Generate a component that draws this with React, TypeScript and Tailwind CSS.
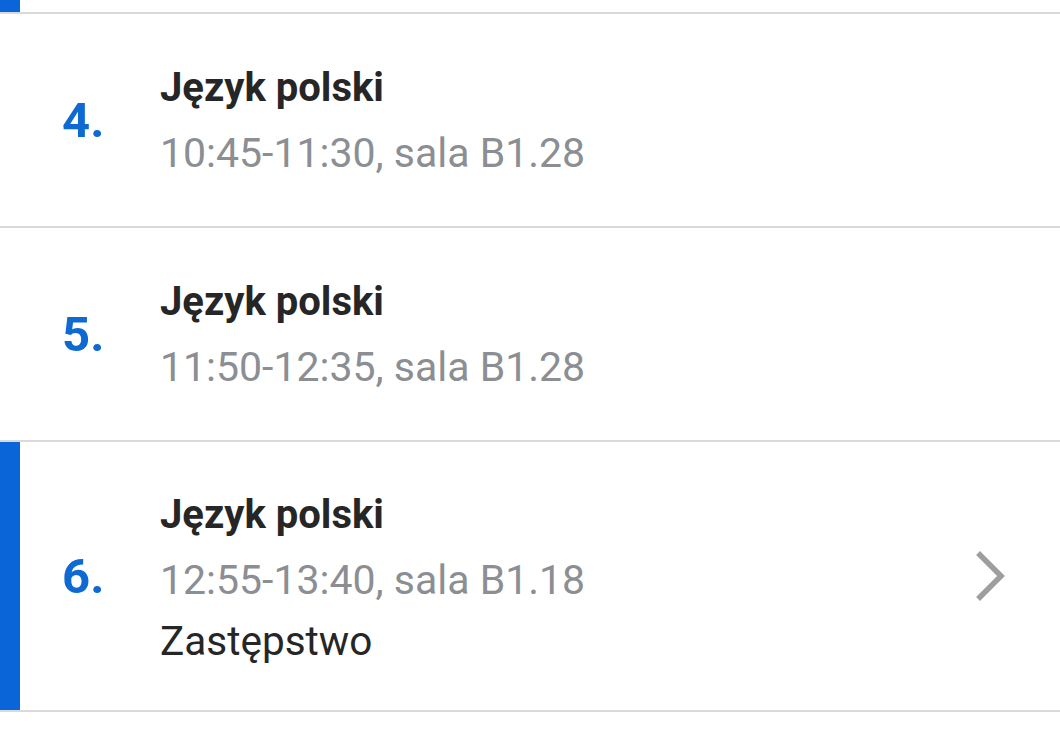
import React from "react";

type Lesson = {
  no: number;
  subject: string;
  time: string;
  note?: string;
  current?: boolean;
};

const lessons: Lesson[] = [
  { no: 4, subject: "Język polski", time: "10:45-11:30, sala B1.28" },
  { no: 5, subject: "Język polski", time: "11:50-12:35, sala B1.28" },
  { no: 6, subject: "Język polski", time: "12:55-13:40, sala B1.18", note: "Zastępstwo", current: true },
];

function Chevron() {
  return (
    <svg width="44" height="52" viewBox="0 0 44 52" fill="none">
      <polyline points="8,5 29,26 8,47" stroke="#9e9e9e" strokeWidth="5.5" strokeLinecap="square" strokeLinejoin="miter" />
    </svg>
  );
}

function LessonRow({ lesson }: { lesson: Lesson }) {
  return (
    <div className={"flex border-b-2 border-[#d9d9d9] " + (lesson.note ? "h-[270px]" : "h-[214px]")}>
      <div className={"w-[20px] shrink-0 " + (lesson.current ? "bg-[#0a66d8]" : "bg-white")} />
      <div className="flex flex-1 items-center">
        <div className="w-[140px] shrink-0 pl-[42px] text-[49px] font-bold leading-none text-[#0f69d3]">{lesson.no}.</div>
        <div className="flex-1">
          <div className="text-[40px] font-bold leading-[66px] text-[#262626]">{lesson.subject}</div>
          <div className="text-[41px] leading-[64px] text-[#8b8e93]">{lesson.time}</div>
          {lesson.note && <div className="text-[40.5px] leading-[58px] text-[#262626]">{lesson.note}</div>}
        </div>
        {lesson.current && (
          <div className="mr-[44px]">
            <Chevron />
          </div>
        )}
      </div>
    </div>
  );
}

export default function App() {
  return (
    <div className="h-[742px] w-[1060px] overflow-hidden bg-white" style={{ fontFamily: "Roboto, 'Noto Sans', sans-serif" }}>
      <div className="flex h-[14px] border-b-2 border-[#d9d9d9]">
        <div className="w-[20px] bg-[#0a66d8]" />
      </div>
      {lessons.map((l) => (
        <LessonRow key={l.no} lesson={l} />
      ))}
    </div>
  );
}
